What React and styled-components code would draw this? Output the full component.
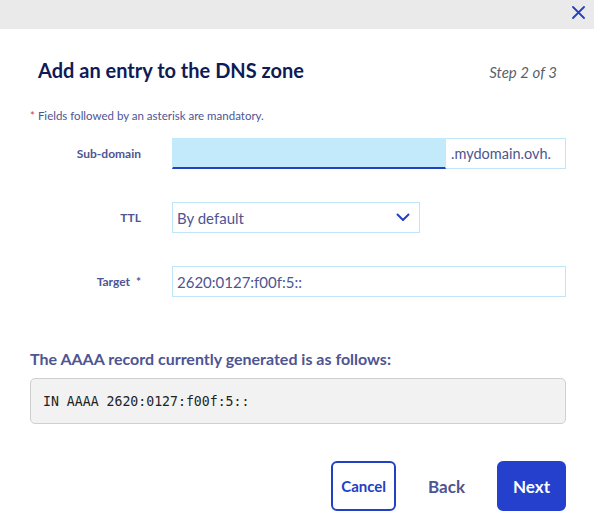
import React from "react";
import styled, { createGlobalStyle } from "styled-components";

const Global = createGlobalStyle`
  html, body { margin: 0; padding: 0; background: #fff; }
  body { font-family: Lato, "Open Sans", sans-serif; }
  * { box-sizing: border-box; }
`;

const Page = styled.div`
  width: 594px;
  height: 532px;
  background: #fff;
  display: flex;
  flex-direction: column;
`;

const TopBar = styled.div`
  height: 29px;
  background: #e9eae9;
  display: flex;
  justify-content: flex-end;
  align-items: center;
  padding-right: 9px;
`;

const CloseButton = styled.button`
  border: 0;
  background: transparent;
  padding: 0;
  width: 14px;
  height: 14px;
  display: flex;
  align-items: center;
  justify-content: center;
  cursor: pointer;
  margin-top: -4px;
`;

const Body = styled.div`
  padding: 0 28px 0 30px;
  display: flex;
  flex-direction: column;
`;

const TitleRow = styled.div`
  display: flex;
  justify-content: space-between;
  align-items: baseline;
  padding: 28px 9px 0 8px;
`;

const Title = styled.h1`
  margin: 0;
  font-size: 20px;
  line-height: 26px;
  font-weight: 700;
  color: #0f1b55;
`;

const Step = styled.span`
  font-size: 15px;
  font-style: italic;
  color: #5a5f6d;
`;

const Note = styled.p`
  margin: 26px 0 0 0;
  font-size: 11.5px;
  line-height: 14px;
  color: #4d5592;
`;

const Star = styled.span`
  color: #d2414b;
  margin-right: 3px;
`;

const Form = styled.div`
  display: grid;
  grid-template-columns: 111px 1fr;
  column-gap: 31px;
  row-gap: 33px;
  margin-top: 15px;
  align-items: center;
`;

const Label = styled.label`
  text-align: right;
  font-size: 12px;
  font-weight: 700;
  color: #4d5592;
`;

const Field = styled.div`
  display: flex;
  height: 31px;
`;

const TextInput = styled.div`
  flex: 1;
  height: 31px;
  display: flex;
  align-items: center;
  padding: 0 4px;
  font-size: 15px;
  color: #4d5592;
  background: ${(p) => (p.$active ? "#c2eafb" : "#fff")};
  border: 1px solid ${(p) => (p.$active ? "#c2eafb" : "#bfe6f6")};
  border-bottom: ${(p) => (p.$active ? "2px solid #2240c4" : "1px solid #bfe6f6")};
`;

const Suffix = styled.div`
  width: 120px;
  height: 31px;
  display: flex;
  align-items: center;
  padding-left: 5px;
  font-size: 14.5px;
  color: #4d5592;
  border: 1px solid #bfe6f6;
  border-left: 0;
`;

const Select = styled.div`
  width: 248px;
  height: 31px;
  display: flex;
  align-items: center;
  justify-content: space-between;
  padding: 0 9px 0 4px;
  font-size: 15px;
  color: #4d5592;
  border: 1px solid #bfe6f6;
`;

const RecordHeading = styled.h2`
  margin: 52px 0 0 0;
  font-size: 16px;
  line-height: 20px;
  font-weight: 700;
  color: #4d5592;
`;

const CodeBox = styled.div`
  margin-top: 9px;
  height: 46px;
  background: #f2f2f2;
  border: 1px solid #cfcfcf;
  border-radius: 5px;
  display: flex;
  align-items: center;
  padding-left: 12px;
  font-family: "DejaVu Sans Mono", monospace;
  font-size: 13.2px;
  color: #222;
`;

const Actions = styled.div`
  display: flex;
  justify-content: flex-end;
  align-items: center;
  margin-top: 37px;
  gap: 18px;
`;

const Button = styled.button`
  height: 50px;
  padding: 0 ${(p) => p.$pad || 14}px;
  border-radius: 6px;
  font-family: Lato, "Open Sans", sans-serif;
  font-size: ${(p) => (p.$variant === "outline" ? 15 : 17)}px;
  font-weight: 700;
  cursor: pointer;
  color: ${(p) => (p.$variant === "primary" ? "#fff" : p.$variant === "outline" ? "#2240c4" : "#4d5592")};
  background: ${(p) => (p.$variant === "primary" ? "#2540cc" : "transparent")};
  border: 2px solid ${(p) => (p.$variant === "outline" ? "#2240c4" : p.$variant === "primary" ? "#2540cc" : "transparent")};
`;

export default function App() {
  return (
    <Page>
      <Global />
      <TopBar>
        <CloseButton aria-label="Close">
          <svg width="13" height="13" viewBox="0 0 13 13">
            <path d="M1 1 L12 12 M12 1 L1 12" stroke="#2240c4" strokeWidth="1.8" strokeLinecap="round" />
          </svg>
        </CloseButton>
      </TopBar>
      <Body>
        <TitleRow>
          <Title>Add an entry to the DNS zone</Title>
          <Step>Step 2 of 3</Step>
        </TitleRow>
        <Note>
          <Star>*</Star>Fields followed by an asterisk are mandatory.
        </Note>
        <Form>
          <Label>Sub-domain</Label>
          <Field>
            <TextInput $active />
            <Suffix>.mydomain.ovh.</Suffix>
          </Field>
          <Label>TTL</Label>
          <Select>
            <span>By default</span>
            <svg width="14" height="9" viewBox="0 0 14 9">
              <path d="M1.5 1.5 L7 7 L12.5 1.5" stroke="#2240c4" strokeWidth="2" fill="none" strokeLinecap="round" strokeLinejoin="round" />
            </svg>
          </Select>
          <Label>Target&nbsp;&nbsp;*</Label>
          <Field>
            <TextInput>2620:0127:f00f:5::</TextInput>
          </Field>
        </Form>
        <RecordHeading>The AAAA record currently generated is as follows:</RecordHeading>
        <CodeBox>IN AAAA 2620:0127:f00f:5::</CodeBox>
        <Actions>
          <Button $variant="outline" $pad={8}>Cancel</Button>
          <Button $pad={12}>Back</Button>
          <Button $variant="primary" $pad={14}>Next</Button>
        </Actions>
      </Body>
    </Page>
  );
}
